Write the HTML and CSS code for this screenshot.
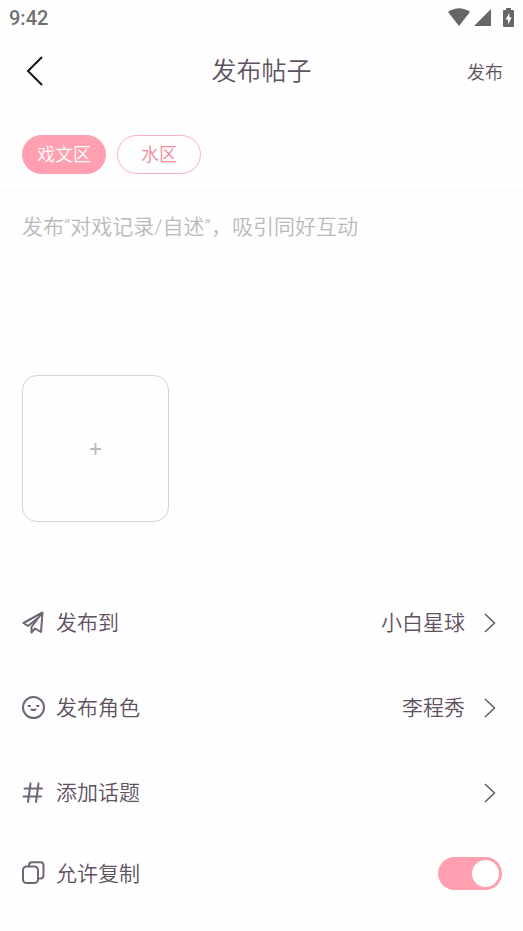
FILE: index.html
```html
<!DOCTYPE html>
<html lang="zh-CN">
<head>
<meta charset="utf-8">
<meta name="viewport" content="width=device-width, initial-scale=1">
<title>发布帖子</title>
<link rel="stylesheet" href="styles.css">
</head>
<body>
<div class="status">
  <span class="clock">9:42</span>
  <div class="status-icons">
    <svg width="22" height="18" viewBox="0 0 22 18" aria-hidden="true"><path d="M0 4Q11-3.500 22 4L11 18Z"/></svg>
    <svg width="17" height="18" viewBox="0 0 17 18" aria-hidden="true"><path d="M17 1V18H0Z"/></svg>
    <svg class="battery" width="11" height="19" viewBox="0 0 11 19" aria-hidden="true"><path d="M3 0H8V2H10Q11 2 11 3V18Q11 19 10 19H1Q0 19 0 18V3Q0 2 1 2H3Z"/><path class="bolt" d="M6.500 5L2.500 11.500H5V16.500L8.800 9.500H6.500Z"/></svg>
  </div>
</div>
<header class="header">
  <button class="back" type="button" aria-label="返回"><svg width="18" height="30" viewBox="0 0 18 30" aria-hidden="true"><path d="M16 1L2 15L16 29"/></svg></button>
  <h1 class="title">发布帖子</h1>
  <button class="publish" type="button">发布</button>
</header>
<nav class="tabs">
  <button class="tab active" type="button">戏文区</button>
  <button class="tab" type="button">水区</button>
</nav>
<main class="main">
  <textarea class="content" aria-label="帖子内容" placeholder="发布“对戏记录/自述”，吸引同好互动"></textarea>
  <button class="upload" type="button" aria-label="添加图片"><svg width="11" height="12" viewBox="0 0 11 12" aria-hidden="true"><path d="M5.500 0V12M0 6H11"/></svg></button>
  <div class="options">
    <button class="row" type="button">
      <svg class="icon" width="24" height="24" viewBox="0 0 24 24" aria-hidden="true"><path d="M20.500 1.500L1.500 12L6 15L16 7M20.500 1.500L19 21L13 17.500L9.500 21.500V16L20.500 1.500"/></svg>
      <span class="label">发布到</span><span class="value">小白星球</span>
      <svg class="chevron" width="12" height="20" viewBox="0 0 12 20" aria-hidden="true"><path d="M1 1L10.500 10L1 19"/></svg>
    </button>
    <button class="row" type="button">
      <svg class="icon" width="24" height="24" viewBox="0 0 24 24" aria-hidden="true"><circle cx="11.500" cy="11.500" r="10.500"/><path d="M6.500 10H8M15 10H16.500M9.500 13.500Q11.500 14.500 13.500 13.500"/></svg>
      <span class="label">发布角色</span><span class="value">李程秀</span>
      <svg class="chevron" width="12" height="20" viewBox="0 0 12 20" aria-hidden="true"><path d="M1 1L10.500 10L1 19"/></svg>
    </button>
    <button class="row" type="button">
      <svg class="icon" width="24" height="24" viewBox="0 0 24 24" aria-hidden="true"><path d="M8.500 2.500L6 21M16.500 2.500L14 21M2.500 7.500H20M1.500 15.500H19"/></svg>
      <span class="label">添加话题</span><span class="value"></span>
      <svg class="chevron" width="12" height="20" viewBox="0 0 12 20" aria-hidden="true"><path d="M1 1L10.500 10L1 19"/></svg>
    </button>
    <label class="row switch-row">
      <svg class="icon" width="24" height="24" viewBox="0 0 24 24" aria-hidden="true"><rect x="1" y="5.500" width="15" height="16.500" rx="3.500"/><path d="M7 5V4.500Q7 1.200 10 1.200H18.500Q21.500 1.200 21.500 4.500V14Q21.500 17.500 18.500 17.500H17"/></svg>
      <span class="label">允许复制</span>
      <input class="switch" type="checkbox" role="switch" checked>
    </label>
  </div>
</main>
</body>
</html>
```
FILE: styles.css
```css
* {
  box-sizing: border-box;
}

body {
  margin: 0;
  background: #fefefe;
  color: #5e5160;
  font-family: Roboto, "Noto Sans CJK SC", sans-serif;
  font-size: 21px;
  font-weight: 350;
}

button {
  margin: 0;
  padding: 0;
  border: 0;
  background: none;
  color: inherit;
  font: inherit;
}

svg {
  display: block;
  flex: none;
}

.status {
  display: flex;
  align-items: center;
  justify-content: space-between;
  height: 36px;
  padding: 0 9px;
  color: #707070;
}

.clock {
  font-size: 20px;
  font-weight: 500;
}

.status-icons {
  display: flex;
  align-items: center;
  gap: 4px;
  padding-bottom: 2px;
  fill: #666;
}

.battery {
  margin-left: 8px;
}

.bolt {
  fill: #fff;
}

.header {
  display: grid;
  grid-template-columns: 1fr auto 1fr;
  align-items: center;
  height: 70px;
  padding: 0 20px;
}

.back {
  justify-self: start;
  padding-left: 6px;
  fill: none;
  stroke: #111;
  stroke-width: 2;
}

.title {
  margin: 0;
  padding-bottom: 4px;
  font-size: 25px;
  font-weight: 350;
}

.publish {
  justify-self: end;
  font-size: 18px;
}

.tabs {
  display: flex;
  gap: 11px;
  padding: 29px 22px 16px;
  border-bottom: 1px solid #f6f6f6;
}

.tab {
  width: 84px;
  height: 39px;
  padding-bottom: 4px;
  border: 1px solid #f9b4c0;
  border-radius: 20px;
  color: #f08a9c;
  font-size: 18px;
}

.tab.active {
  border-color: #ff9fb0;
  background: #ff9fb0;
  color: #fff;
}

.main {
  padding: 20px 21px 20px 22px;
}

.content {
  display: block;
  width: 100%;
  height: 164px;
  padding: 0;
  border: 0;
  outline: 0;
  background: none;
  color: inherit;
  font: inherit;
  line-height: 32px;
  resize: none;
}

.content::placeholder {
  color: #bababa;
}

.upload {
  display: grid;
  place-items: center;
  width: 147px;
  height: 147px;
  border: 1px solid #d4d4d4;
  border-radius: 15px;
  stroke: #bbb;
  stroke-width: 2;
}

.options {
  margin-top: 58px;
}

.row {
  display: flex;
  align-items: center;
  width: 100%;
  height: 85px;
  padding-right: 6px;
}

.icon {
  margin-right: 10px;
  fill: none;
  stroke: #706475;
  stroke-width: 2;
  stroke-linecap: round;
  stroke-linejoin: round;
}

.label,
.value {
  padding-bottom: 3px;
}

.label {
  flex: 1;
  text-align: left;
}

.value {
  margin-right: 19px;
}

.chevron {
  fill: none;
  stroke: #655966;
  stroke-width: 1.5;
}

.switch-row {
  height: 76px;
  padding-right: 0;
}

.switch {
  display: flex;
  align-items: center;
  justify-content: flex-end;
  appearance: none;
  width: 64px;
  height: 33px;
  margin: 0;
  padding: 0 3px;
  border-radius: 17px;
  background: #ff9fb0;
}

.switch::before {
  content: "";
  width: 27px;
  height: 27px;
  border-radius: 50%;
  background: #fff;
}

.switch:not(:checked) {
  justify-content: flex-start;
  background: #ddd;
}
```
